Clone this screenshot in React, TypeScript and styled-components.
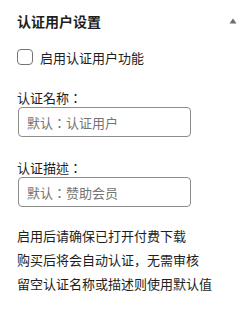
import React from "react";
import styled, { createGlobalStyle } from "styled-components";

const Global = createGlobalStyle`
  html, body { margin: 0; padding: 0; background: #fff; }
  body {
    font-family: "Noto Sans CJK SC", "Noto Sans", sans-serif;
    color: #1e1e1e;
  }
`;

const Panel = styled.div`
  width: 251px;
  height: 310px;
  box-sizing: border-box;
  padding: 0 14px 0 17px;
  display: flex;
  flex-direction: column;
`;

const Header = styled.div`
  display: flex;
  align-items: center;
  justify-content: space-between;
  height: 20px;
  margin-top: 11px;
`;

const Title = styled.h2`
  margin: 0;
  font-size: 14px;
  line-height: 20px;
  font-weight: 700;
  color: #1e1e1e;
`;

const CheckRow = styled.label`
  display: flex;
  align-items: center;
  gap: 7px;
  margin-top: 18px;
  height: 16px;
  font-size: 13px;
  color: #1e1e1e;
`;

const Box = styled.span`
  width: 16px;
  height: 16px;
  box-sizing: border-box;
  border: 1px solid #757575;
  border-radius: 4px;
  flex: none;
`;

const Field = styled.div<{ $top: number }>`
  display: flex;
  flex-direction: column;
  margin-top: ${(p) => p.$top}px;
`;

const FieldLabel = styled.div`
  font-family: "Noto Sans CJK TC", "Noto Sans CJK SC", sans-serif;
  font-size: 13px;
  line-height: 18px;
  color: #1e1e1e;
`;

const Input = styled.input`
  width: 173px;
  height: 30px;
  box-sizing: border-box;
  margin-left: 1px;
  border: 1px solid #8c8c8c;
  border-radius: 4px;
  padding: 0 8px;
  font-family: "Noto Sans CJK TC", "Noto Sans CJK SC", sans-serif;
  font-size: 13px;
  color: #1e1e1e;
  background: #fff;
  outline: none;
  &::placeholder { color: #757575; }
`;

const Help = styled.div`
  margin-top: 17px;
  font-size: 13px;
  line-height: 24px;
  color: #1e1e1e;
`;

const Caret = () => (
  <svg width="8" height="6" viewBox="0 0 8 6">
    <polygon points="4,0.5 7.5,5.5 0.5,5.5" fill="#6d6d6d" />
  </svg>
);

export default function App() {
  return (
    <>
      <Global />
      <Panel>
        <Header>
          <Title>认证用户设置</Title>
          <Caret />
        </Header>
        <CheckRow>
          <Box />
          启用认证用户功能
        </CheckRow>
        <Field $top={24}>
          <FieldLabel>认证名称：</FieldLabel>
          <Input placeholder="默认：认证用户" />
        </Field>
        <Field $top={22}>
          <FieldLabel>认证描述：</FieldLabel>
          <Input placeholder="默认：赞助会员" />
        </Field>
        <Help>
          <div>启用后请确保已打开付费下载</div>
          <div>购买后将会自动认证，无需审核</div>
          <div>留空认证名称或描述则使用默认值</div>
        </Help>
      </Panel>
    </>
  );
}
